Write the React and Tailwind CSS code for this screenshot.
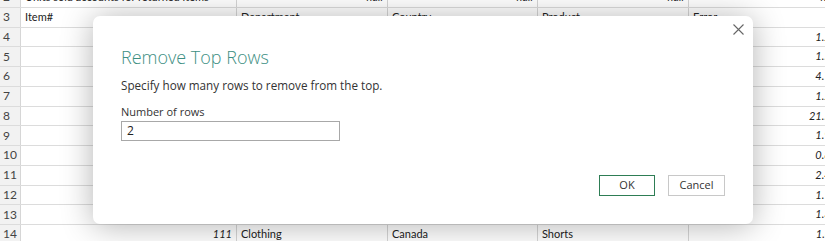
import React from "react";

const errVals = ["1.25", "1.50", "4.75", "1.20", "21.50", "1.90", "0.85", "2.40", "1.10", "1.35", "1.60"];

function Cell({ w, children, align = "left", italic = false, last = false }) {
  return (
    <div
      className={`${w} h-full shrink-0 flex items-center px-[4px] overflow-hidden whitespace-nowrap ${
        align === "right" ? "justify-end" : "justify-start"
      } ${italic ? "italic" : ""} ${last ? "" : "border-r border-[#d6d6d6]"}`}
    >
      {children}
    </div>
  );
}

function Row({ label, cells }) {
  return (
    <div className="flex h-[19.75px] border-b border-[#dcdcdc] text-[11px] text-[#222]">
      <div className="w-[21px] shrink-0 h-full flex items-center pl-[3px] bg-[#f2f2f2] border-r border-[#d6d6d6] text-[#444] text-[12px]">
        {label}
      </div>
      <Cell w="w-[216px]" align={cells[0]?.align} italic={cells[0]?.italic}>{cells[0]?.t}</Cell>
      <Cell w="w-[151px]" align={cells[1]?.align} italic={cells[1]?.italic}>{cells[1]?.t}</Cell>
      <Cell w="w-[150px]" align={cells[2]?.align} italic={cells[2]?.italic}>{cells[2]?.t}</Cell>
      <Cell w="w-[151px]" align={cells[3]?.align} italic={cells[3]?.italic}>{cells[3]?.t}</Cell>
      <Cell w="w-[152px]" align={cells[4]?.align} italic={cells[4]?.italic} last>{cells[4]?.t}</Cell>
    </div>
  );
}

export default function App() {
  const rows = [];
  for (let i = 4; i <= 13; i++) {
    rows.push(
      <Row
        key={i}
        label={i}
        cells={[{}, {}, {}, {}, { t: errVals[i - 4], align: "right", italic: true }]}
      />
    );
  }
  return (
    <div
      className="relative w-[825px] h-[241px] overflow-hidden bg-white"
      style={{ fontFamily: "Lato, 'Open Sans', sans-serif" }}
    >
      <div className="mt-[-12px]">
        <Row
          label={2}
          cells={[
            { t: "Units sold accounts for returned items" },
            { t: "null", align: "right", italic: true },
            { t: "null", align: "right", italic: true },
            { t: "null", align: "right", italic: true },
            { t: "null", align: "right", italic: true },
          ]}
        />
        <Row
          label={3}
          cells={[{ t: "Item#" }, { t: "Department" }, { t: "Country" }, { t: "Product" }, { t: "Error" }]}
        />
        {rows}
        <Row
          label={14}
          cells={[
            { t: "111", align: "right", italic: true },
            { t: "Clothing" },
            { t: "Canada" },
            { t: "Shorts" },
            { t: errVals[10], align: "right", italic: true },
          ]}
        />
      </div>

      <div
        className="absolute left-[93px] top-[16px] w-[660px] h-[208px] rounded-[7px] bg-white shadow-[0_2px_32px_rgba(0,0,0,0.3)]"
        style={{ fontFamily: "'Open Sans', 'Noto Sans', sans-serif" }}
      >
        <button className="absolute top-[7px] right-[9px] w-[12px] h-[12px] flex items-center justify-center">
          <svg width="11" height="11" viewBox="0 0 11 11">
            <path d="M0.5 0.5 L10.5 10.5 M10.5 0.5 L0.5 10.5" stroke="#666" strokeWidth="1.1" fill="none" />
          </svg>
        </button>
        <div className="pt-[27px] px-[28px]">
          <div className="text-[18px] leading-[28px] font-light text-[#3d8f83]">Remove Top Rows</div>
          <div className="mt-[5px] text-[11.7px] leading-[18px] text-[#333]">
            Specify how many rows to remove from the top.
          </div>
          <div className="mt-[10px] text-[11px] leading-[16px] text-[#333]">Number of rows</div>
          <div className="mt-[1px] w-[219px] h-[20px] border border-[#a8a8a8] flex items-center px-[5px] text-[12px] text-[#222]">
            2
          </div>
          <div className="mt-[34px] flex justify-end gap-[13px]">
            <div className="w-[56px] h-[21px] border border-[#2e7d55] flex items-center justify-center text-[11px] text-[#333]">
              OK
            </div>
            <div className="w-[57px] h-[21px] border border-[#c8c8c8] flex items-center justify-center text-[11px] text-[#333]">
              Cancel
            </div>
          </div>
        </div>
      </div>
    </div>
  );
}
